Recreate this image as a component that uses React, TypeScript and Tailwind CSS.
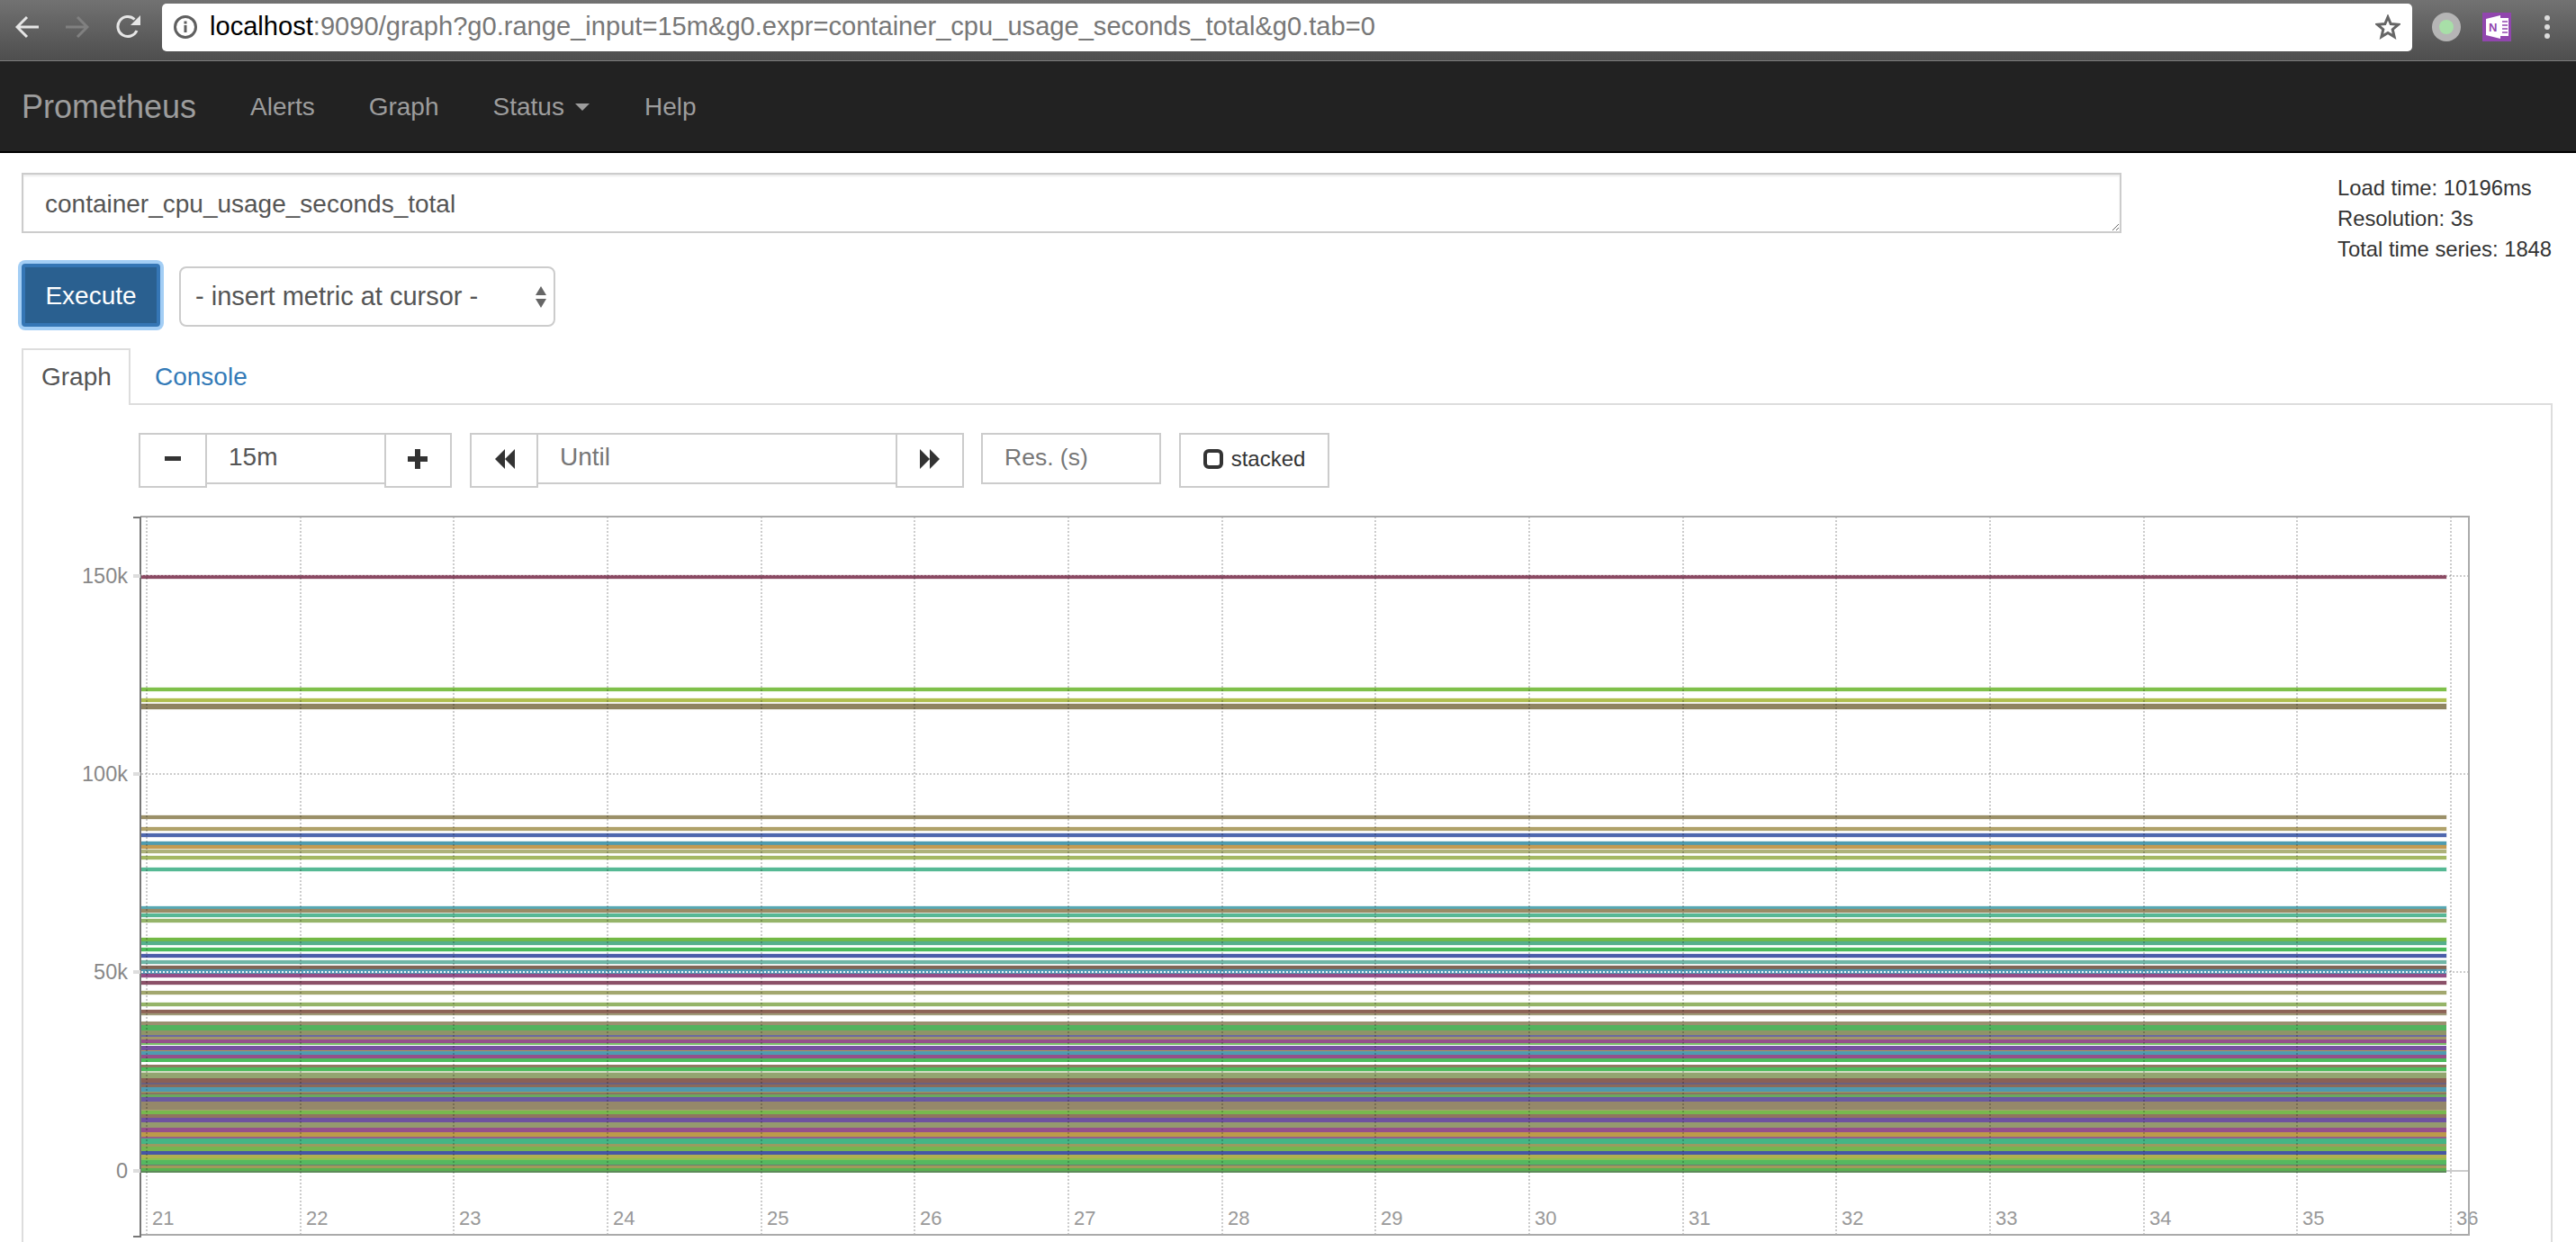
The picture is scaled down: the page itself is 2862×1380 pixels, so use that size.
// y, height and colour of every band, read from the reference
const series: [number, number, string][] = [
    [638, 4, '#8a4a63'],
    [763, 4, '#7fc04a'],
    [775, 4, '#b0bf4f'],
    [781, 6, '#8f8461'],
    [905, 4, '#9b9068'],
    [918, 4, '#b0a26a'],
    [925, 4, '#4f68ae'],
    [934, 4, '#4f9cb0'],
    [938, 4, '#c39b52'],
    [943, 4, '#adb27a'],
    [950, 4, '#a3b862'],
    [963, 4, '#55b995'],
    [1006, 4, '#58a8b3'],
    [1009, 4, '#9a8b66'],
    [1014, 4, '#57b895'],
    [1020, 4, '#95b46a'],
    [1041, 4, '#74b946'],
    [1045, 4, '#55b08c'],
    [1052, 4, '#4cbc5c'],
    [1059, 4, '#4a5daa'],
    [1066, 4, '#6fb5a5'],
    [1072, 4, '#826655'],
    [1076, 5, '#4f9cb5'],
    [1081, 4, '#934e88'],
    [1089, 4, '#8b5068'],
    [1100, 4, '#a3a76e'],
    [1113, 4, '#95b467'],
    [1121, 5, '#8d6356'],
    [1125, 2, '#a09a78'],
    [1134, 4, '#9a9070'],
    [1138, 6, '#52b35e'],
    [1144, 5, '#8f9468'],
    [1149, 2, '#6a6aa0'],
    [1151, 3, '#a0976a'],
    [1154, 4, '#95508a'],
    [1158, 2, '#7cc06a'],
    [1161, 5, '#7652a0'],
    [1166, 1, '#b09b5a'],
    [1167, 4, '#4f9bb0'],
    [1171, 4, '#96508a'],
    [1175, 4, '#4cbc5c'],
    [1182, 3, '#8f7a60'],
    [1185, 4, '#4cbc5c'],
    [1189, 2, '#d0dcc0'],
    [1191, 6, '#93a570'],
    [1197, 5, '#8a6055'],
    [1202, 2, '#6a6080'],
    [1204, 3, '#8b6a5a'],
    [1207, 5, '#4f9ab0'],
    [1212, 1, '#a09a60'],
    [1213, 2, '#8a7560'],
    [1215, 3, '#6aa860'],
    [1218, 5, '#6a5aa0'],
    [1223, 9, '#95886a'],
    [1232, 1, '#a8a070'],
    [1233, 4, '#78b84e'],
    [1237, 4, '#8f7560'],
    [1241, 5, '#6f52a0'],
    [1246, 6, '#959a6e'],
    [1252, 5, '#96508a'],
    [1257, 5, '#bd9a4a'],
    [1262, 2, '#95608a'],
    [1264, 6, '#45b585'],
    [1270, 3, '#9a9a60'],
    [1273, 5, '#75b550'],
    [1278, 4, '#4656a5'],
    [1282, 4, '#b0b050'],
    [1286, 2, '#8cc050'],
    [1288, 5, '#55b860'],
    [1293, 1, '#6a7a70'],
    [1294, 3, '#a09a5a'],
    [1297, 3, '#58b050'],
    [1300, 2, '#5e8a5a'],
];

const xTicks = Array.from({ length: 16 }, (_, i) => ({ label: 21 + i, x: Math.round(163 + i * 170.67) }));
const yTicks = [
    { label: '150k', y: 639 },
    { label: '100k', y: 859 },
    { label: '50k', y: 1079 },
    { label: '0', y: 1300 },
];

const BrowserBar = () => (
    <div className="flex h-[68px] items-center border-b border-[#7d7d7d] bg-gradient-to-b from-[#727272] to-[#4e4e4e] pb-[7px] pl-[17px]">
        <svg width="26" height="26" viewBox="0 0 26 26" fill="none" stroke="#e6e6e6" strokeWidth="3">
            <path d="M26 13H2M13 2L2 13l11 11" />
        </svg>
        <svg className="ml-[30px]" width="26" height="26" viewBox="0 0 26 26" fill="none" stroke="#808080" strokeWidth="3">
            <path d="M0 13h24M13 2l11 11-11 11" />
        </svg>
        <svg className="ml-[30px]" width="28" height="28" viewBox="0 0 28 28" fill="none">
            <path d="M23 18A11 11 0 1 1 20.5 5.5" stroke="#e6e6e6" strokeWidth="3" />
            <path d="M27 1V12H16Z" fill="#e6e6e6" />
        </svg>
        <div className="ml-[23px] flex h-[53px] w-[2500px] items-center rounded-[5px] bg-white pl-[13px] pr-[13px]">
            <svg width="26" height="26" viewBox="0 0 26 26" fill="none">
                <circle cx="13" cy="13" r="11.5" stroke="#5f5f5f" strokeWidth="3" />
                <rect x="11.5" y="11" width="3" height="8" fill="#5f5f5f" />
                <rect x="11.5" y="6.5" width="3" height="3" fill="#5f5f5f" />
            </svg>
            <span className="ml-[14px] whitespace-nowrap text-[29.1px] text-[#777]">
                <span className="text-black">localhost</span>:9090/graph?g0.range_input=15m&amp;g0.expr=container_cpu_usage_seconds_total&amp;g0.tab=0
            </span>
            <svg className="ml-auto" width="28" height="28" viewBox="0 0 28 28" fill="none" stroke="#666" strokeWidth="3" strokeLinejoin="miter">
                <path d="M14 3l3.2 7.6 8.3.7-6.3 5.4 1.9 8.1L14 20.5l-7.1 4.3 1.9-8.1-6.3-5.4 8.3-.7z" />
            </svg>
        </div>
        <div className="ml-[22px] flex h-8 w-8 items-center justify-center rounded-full bg-[#b5b5b5]">
            <div className="h-4 w-4 rounded-full bg-[#a8dfa8]" />
        </div>
        <svg className="ml-6" width="32" height="32" viewBox="0 0 32 32">
            <rect width="32" height="32" fill="#9146ae" />
            <path d="M4 7L20 3V29L4 25Z" fill="#fff" />
            <rect x="20" y="6" width="9" height="20" fill="#fff" />
            <path d="M22 10h6M22 14h6M22 18h6M22 22h6" stroke="#9146ae" strokeWidth="1.5" />
            <text x="7" y="20.5" fontSize="13" fontWeight="700" fill="#9146ae">N</text>
        </svg>
        <div className="ml-[37px] flex flex-col gap-1">
            <div className="h-[6px] w-[6px] rounded-full bg-[#dcdcdc]" />
            <div className="h-[6px] w-[6px] rounded-full bg-[#dcdcdc]" />
            <div className="h-[6px] w-[6px] rounded-full bg-[#dcdcdc]" />
        </div>
    </div>
);

const NavBar = () => (
    <nav className="flex h-[102px] items-center border-b-2 border-black bg-[#222] pl-[24px] pt-[2px] text-[28px] text-[#9d9d9d]">
        <span className="text-[36px]">Prometheus</span>
        <span className="ml-[60px]">Alerts</span>
        <span className="ml-[60px]">Graph</span>
        <span className="ml-[60px] flex items-center gap-[12px]">
            Status
            <span className="h-0 w-0 border-x-[8px] border-t-[8px] border-x-transparent border-t-[#9d9d9d]" />
        </span>
        <span className="ml-[61px]">Help</span>
    </nav>
);

const Controls = () => (
    <div className="flex items-start pl-[128px] pt-[31px] text-[28px] text-[#555]">
        <button className="flex h-[61px] w-[76px] items-center justify-center border-2 border-[#ccc] bg-white pb-[4px]">
            <span className="h-[5px] w-[18px] bg-[#333]" />
        </button>
        <input readOnly defaultValue="15m" className="h-[57px] w-[197px] border-y-2 border-[#ccc] pb-[3px] pl-[24px] text-[#555] outline-none" />
        <button className="flex h-[61px] w-[75px] items-center justify-center border-2 border-[#ccc] bg-white pb-[4px] pr-[2px]">
            <svg width="22" height="22" viewBox="0 0 22 22" fill="#333">
                <path d="M8 0h6v8h8v6h-8v8H8v-8H0V8h8z" />
            </svg>
        </button>
        <button className="ml-[20px] flex h-[61px] w-[76px] items-center justify-center border-2 border-[#ccc] bg-white pb-[4px] pl-[2px]">
            <svg width="22" height="22" viewBox="0 0 22 22" fill="#333">
                <path d="M11 0V22L0 11zM22 0V22L11 11z" />
            </svg>
        </button>
        <input readOnly placeholder="Until" className="h-[57px] w-[397px] border-y-2 border-[#ccc] pb-[3px] pl-[24px] outline-none placeholder:text-[#777]" />
        <button className="flex h-[61px] w-[76px] items-center justify-center border-2 border-[#ccc] bg-white pb-[4px]">
            <svg width="22" height="22" viewBox="0 0 22 22" fill="#333">
                <path d="M0 0V22L11 11zM11 0V22L22 11z" />
            </svg>
        </button>
        <input readOnly placeholder="Res. (s)" className="ml-[19px] h-[57px] w-[200px] border-2 border-[#ccc] pb-[3px] pl-6 text-[26.5px] outline-none placeholder:text-[#777]" />
        <button className="ml-5 flex h-[61px] w-[167px] items-center justify-center gap-[9px] border-2 border-[#ccc] bg-white pb-[3px] text-[24px] text-[#333]">
            <span className="h-[22px] w-[22px] rounded-[6px] border-[4px] border-[#333]" />
            stacked
        </button>
    </div>
);

const Chart = () => (
    <svg className="ml-[34px] mt-[19px] block" width="2720" height="820" viewBox="60 560 2720 820" fill="none">
        {yTicks.slice(0, 3).map((t) => (
            <line key={t.y} x1="157" x2="2742" y1={t.y} y2={t.y} stroke="#ccc" strokeWidth="2" strokeDasharray="2 2" />
        ))}
        <line x1="157" x2="2742" y1="1300" y2="1300" stroke="#ccc" strokeWidth="2" />
        {series.map(([y, h, color]) => (
            <rect
                key={`${y}-${color}`}
                x="157"
                y={y}
                width="2561"
                height={h}
                fill={color}
                stroke={y < 1130 ? color : 'none'}
                strokeOpacity="0.3"
            />
        ))}
        <line x1="157" x2="2718" y1="638" y2="638" stroke="#fff" strokeOpacity="0.3" strokeWidth="2" strokeDasharray="2 2" />
        <line x1="157" x2="2718" y1="1079" y2="1079" stroke="#fff" strokeOpacity="0.9" strokeWidth="2" strokeDasharray="2 2" />
        {xTicks.map((t) => (
            <g key={t.label}>
                <line x1={t.x} x2={t.x} y1="573" y2="1371" stroke="#000" strokeOpacity="0.2" strokeWidth="2" strokeDasharray="2 2" />
                <text x={t.x + 6} y="1360" className="fill-[#999] text-[22px]">{t.label}</text>
            </g>
        ))}
        <path d="M156 573H2743V1371H156" stroke="#aaa" strokeWidth="2" />
        <path d="M148 574H156V1373H148" stroke="#777" strokeWidth="2" />
        {yTicks.map((t) => (
            <g key={t.label}>
                <rect x="148" y={t.y - 2} width="8" height="4" fill="#ddd" />
                <text x="142" y={t.y + 8} textAnchor="end" className="fill-[#888] text-[23.5px]">{t.label}</text>
            </g>
        ))}
    </svg>
);

export default function App() {
    return (
        <div className="h-[1380px] w-[2862px] overflow-hidden bg-white font-['Liberation_Sans',Arial,sans-serif]">
            <BrowserBar />
            <NavBar />
            <main className="px-6 pt-5">
                <div className="flex items-start">
                    <div className="w-[2333px]">
                        <textarea
                            readOnly
                            defaultValue="container_cpu_usage_seconds_total"
                            className="mt-[2px] block h-[67px] w-full resize-y border-2 border-[#ccc] pl-6 pt-[13px] text-[28px] leading-10 text-[#555] shadow-[inset_0_2px_2px_rgba(0,0,0,0.075)] outline-none"
                        />
                        <div className="mt-[34px] flex items-start">
                            <button className="h-[70px] w-[154px] rounded-[4px] border-[4px] border-[#3576b5] bg-[#2a6090] pt-[2px] text-[28px] text-white shadow-[0_0_0_4px_#a3cef5]">
                                Execute
                            </button>
                            <div className="relative ml-[21px] mt-[3px]">
                                <select className="h-[67px] w-[418px] appearance-none rounded-[8px] border-2 border-[#ccc] bg-white pl-4 text-[29px] text-[#555] outline-none">
                                    <option>- insert metric at cursor -</option>
                                </select>
                                <svg className="absolute right-[9px] top-[22px]" width="14" height="24" viewBox="0 0 14 24" fill="#666">
                                    <path d="M7 0l6 10H1zM7 24l6-10H1z" />
                                </svg>
                            </div>
                        </div>
                    </div>
                    <div className="ml-[240px] whitespace-nowrap pt-[2px] text-[23.8px] leading-[34px] text-[#333]">
                        <div>Load time: 10196ms</div>
                        <div>Resolution: 3s</div>
                        <div>Total time series: 1848</div>
                    </div>
                </div>
                <div className="mt-6 w-[2812px]">
                    <div className="flex h-[63px] items-start border-b-2 border-[#ddd] text-[28px]">
                        <div className="h-[63px] w-[121px] border-2 border-b-0 border-[#ddd] bg-white pl-5 pt-[9px] text-[#555]">Graph</div>
                        <div className="pl-[27px] pt-[11px] text-[#337ab7]">Console</div>
                    </div>
                    <div className="h-[930px] border-x-2 border-[#ddd]">
                        <Controls />
                        <Chart />
                    </div>
                </div>
            </main>
        </div>
    );
}
